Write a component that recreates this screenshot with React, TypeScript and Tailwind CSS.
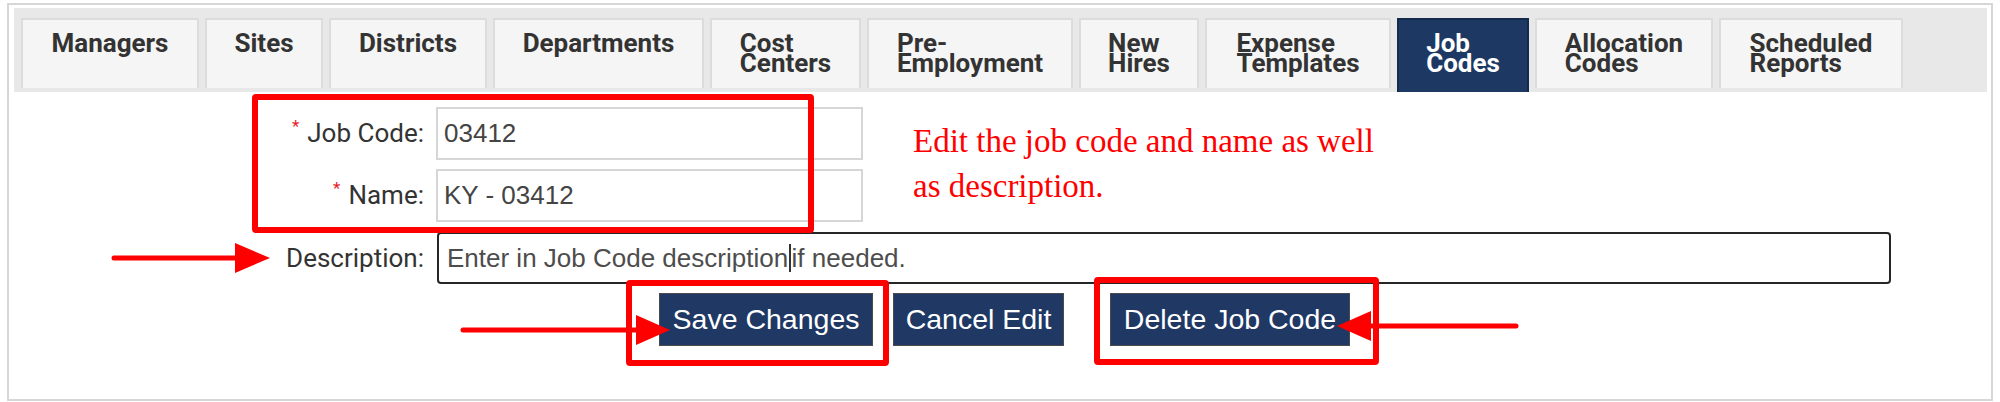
const tabs = [
  { lines: ['Managers'], w: 'w-[178px]' },
  { lines: ['Sites'], w: 'w-[118px]' },
  { lines: ['Districts'], w: 'w-[158px]' },
  { lines: ['Departments'], w: 'w-[211px]' },
  { lines: ['Cost', 'Centers'], w: 'w-[151px]' },
  { lines: ['Pre-', 'Employment'], w: 'w-[206px]' },
  { lines: ['New', 'Hires'], w: 'w-[120px]' },
  { lines: ['Expense', 'Templates'], w: 'w-[186px]' },
  { lines: ['Job', 'Codes'], w: 'w-[132px]', active: true },
  { lines: ['Allocation', 'Codes'], w: 'w-[178px]' },
  { lines: ['Scheduled', 'Reports'], w: 'w-[184px]' },
]

function Tab({ lines, w, active }: { lines: string[]; w: string; active?: boolean }) {
  return (
    <div
      className={`flex justify-center ${w} pt-[13px] border-2 border-b-0 ${
        active
          ? 'h-[74px] bg-[#1d3963] border-[#15294a] text-white'
          : 'h-[70px] bg-[#f5f5f5] border-[#dcdcdc] text-[#333]'
      }`}
    >
      <div className="text-left font-['Roboto',sans-serif] font-bold text-[26px] leading-[20px] whitespace-nowrap">
        {lines.map((l) => (
          <div key={l}>{l}</div>
        ))}
      </div>
    </div>
  )
}

function Label({ text, required }: { text: string; required?: boolean }) {
  return (
    <div className="flex items-center justify-end font-['Roboto',sans-serif] text-[26px] text-[#333]">
      {required && <span className="text-[#e8202a] text-[17px] mr-[8px] -mt-[14px]">*</span>}
      {text}
    </div>
  )
}

function Btn({ label, w }: { label: string; w: string }) {
  return (
    <button
      className={`${w} h-[53px] bg-[#1f3864] border border-[#4a4a4a] text-white text-center font-['Liberation_Sans',Arial,sans-serif] text-[28.5px]`}
    >
      {label}
    </button>
  )
}

export default function App() {
  return (
    <div className="relative w-[2000px] h-[402px] bg-white">
      <div className="ml-[7px] mt-[3px] w-[1986px] h-[398px] border-2 border-[#d6d6d6] bg-white">
        {/* tab strip */}
        <div className="ml-[5px] mr-[4px] mt-[3px] h-[84px] bg-[#e8e8e8] pl-[7px] pt-[10px] flex items-start gap-[6px]">
          {tabs.map((t) => (
            <Tab key={t.lines.join(' ')} {...t} />
          ))}
        </div>

        {/* form */}
        <div className="mt-[15px] flex items-start">
          <div className="grid grid-cols-[415px_427px] gap-x-[12px] gap-y-[9px]">
            <Label text="Job Code:" required />
            <div className="h-[53px] border-2 border-[#d6d6d6] pl-[6px] flex items-center font-['Liberation_Sans',Arial,sans-serif] text-[26px] text-[#444]">
              03412
            </div>
            <Label text="Name:" required />
            <div className="h-[53px] border-2 border-[#d6d6d6] pl-[6px] flex items-center font-['Liberation_Sans',Arial,sans-serif] text-[26px] text-[#444]">
              KY - 03412
            </div>
          </div>
          <p className="ml-[50px] mt-[12px] font-['Liberation_Serif','Times_New_Roman',serif] text-[33px] leading-[45px] text-[#ff0000] whitespace-nowrap">
            Edit the job code and name as well
            <br />
            as description.
          </p>
        </div>

        <div className="mt-[10px] grid grid-cols-[415px_1454px] gap-x-[13px]">
          <Label text="Description:" />
          <div className="h-[52px] border-2 border-[#262626] rounded-[4px] pl-[8px] flex items-center font-['Liberation_Sans',Arial,sans-serif] text-[26px] text-[#4d4d4d] whitespace-pre">
            Enter in Job Code description
            <span className="inline-block w-[1.5px] h-[28px] bg-[#333] mx-[1px]" />
            if needed.
          </div>
        </div>

        <div className="mt-[9px] ml-[650px] flex items-center">
          <Btn label="Save Changes" w="w-[214px]" />
          <div className="ml-[20px]">
            <Btn label="Cancel Edit" w="w-[171px]" />
          </div>
          <div className="ml-[46px]">
            <Btn label="Delete Job Code" w="w-[240px]" />
          </div>
        </div>
      </div>

      {/* annotation overlays */}
      <div className="absolute left-[252px] top-[91px] w-[562px] h-[139px] border-[6px] border-[#ff0000] rounded-[4px]" />
      <div className="absolute left-[626px] top-[277px] w-[263px] h-[86px] border-[6px] border-[#ff0000] rounded-[4px]" />
      <div className="absolute left-[1094px] top-[274px] w-[285px] h-[88px] border-[6px] border-[#ff0000] rounded-[4px]" />

      <svg className="absolute inset-0 pointer-events-none" width="2000" height="402" viewBox="0 0 2000 402">
        <g fill="#ff0000" stroke="#ff0000" strokeLinecap="round">
          <line x1="114" y1="255" x2="238" y2="255" strokeWidth="5" />
          <polygon points="235,240 270,255 235,270" stroke="none" />
          <line x1="463" y1="327" x2="640" y2="327" strokeWidth="5" />
          <polygon points="636,312 670,327 636,342" stroke="none" />
          <line x1="1367" y1="323" x2="1516" y2="323" strokeWidth="5" />
          <polygon points="1371,308 1337,323 1371,338" stroke="none" />
        </g>
      </svg>
    </div>
  )
}
